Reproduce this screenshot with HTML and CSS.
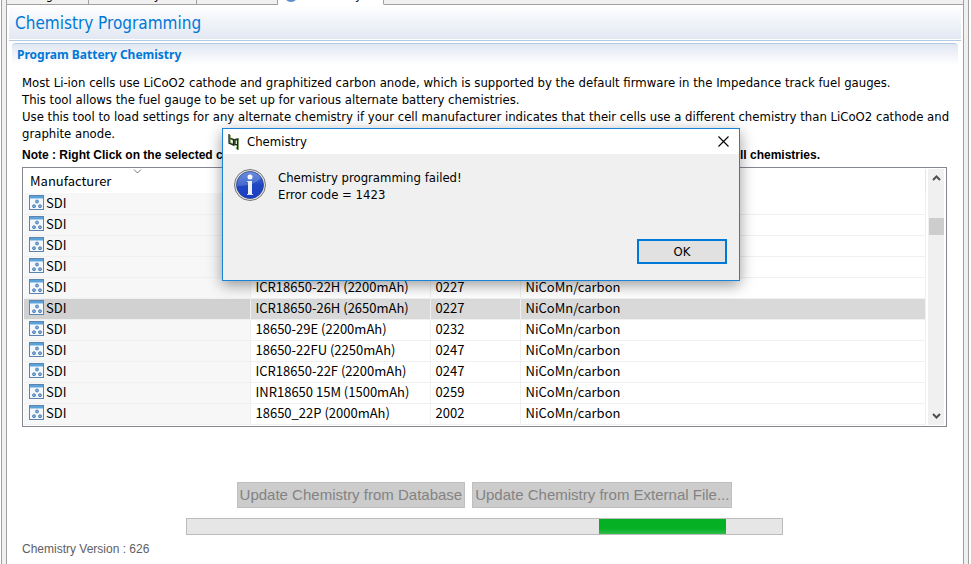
FILE: index.html
```html
<!DOCTYPE html>
<html lang="en">
<head>
    <meta charset="UTF-8">
    <meta name="viewport" content="width=device-width, initial-scale=1.0">
    <title>Chemistry Programming</title>
    <link rel="stylesheet" href="styles.css">
</head>
<body>
    <!-- shared icon for the manufacturer rows -->
    <svg class="defs" width="0" height="0" aria-hidden="true">
        <symbol id="cell" viewBox="0 0 15 16">
            <rect x="0.5" y="0.5" width="14" height="14" fill="#f2f8fd" stroke="#5c84ae"/>
            <rect x="1" y="1" width="13" height="2" fill="#5aa2d8"/>
            <rect x="1" y="3" width="13" height="1" fill="#a9d0ee"/>
            <g fill="#7fb0e0" stroke="#4471a6" stroke-width="0.8">
                <circle cx="8" cy="6.5" r="1.5"/>
                <circle cx="5" cy="11.2" r="1.5"/>
                <circle cx="11" cy="11.2" r="1.5"/>
            </g>
        </symbol>
    </svg>

    <div class="window">
        <div class="edge edge-left"></div>
        <div class="main">
            <div class="tabs">
                <div class="tab tab-registers">Registers</div>
                <div class="tab tab-memory">Data Memory</div>
                <div class="tab tab-commands"><span class="tab-dot gray"></span>Commands</div>
                <div class="tab tab-chem active"><span class="tab-dot"></span>Chemistry</div>
                <div class="tab-rest"></div>
            </div>

            <h1>Chemistry Programming</h1>
            <div class="section">
                <h2>Program Battery Chemistry</h2>
            </div>

            <div class="content">
                <p>Most Li-ion cells use LiCoO2 cathode and graphitized carbon anode, which is supported by the default firmware in the Impedance track fuel gauges.<br>
                This tool allows the fuel gauge to be set up for various alternate battery chemistries.<br>
                Use this tool to load settings for any alternate chemistry if your cell manufacturer indicates that their cells use a different chemistry than LiCoO2 cathode and graphite anode.</p>
                <div class="note">
                    <strong>Note : Right Click on the selected ch</strong>
                    <strong>ll chemistries.</strong>
                </div>

                <div class="list">
                    <table>
                        <colgroup><col class="c1"><col class="c2"><col class="c3"><col></colgroup>
                        <thead>
                            <tr>
                                <th>Manufacturer
                                    <svg class="sort" width="9" height="5" viewBox="0 0 9 5"><path d="M1 .5l3.500 3.500L8 .5" fill="none" stroke="#777"/></svg>
                                </th>
                                <th></th><th></th><th></th>
                            </tr>
                        </thead>
                        <tbody>
                            <tr><td><svg class="cell"><use href="#cell"/></svg>SDI</td><td></td><td></td><td></td></tr>
                            <tr><td><svg class="cell"><use href="#cell"/></svg>SDI</td><td></td><td></td><td></td></tr>
                            <tr><td><svg class="cell"><use href="#cell"/></svg>SDI</td><td></td><td></td><td></td></tr>
                            <tr><td><svg class="cell"><use href="#cell"/></svg>SDI</td><td></td><td></td><td></td></tr>
                            <tr><td><svg class="cell"><use href="#cell"/></svg>SDI</td><td>ICR18650-22H (2200mAh)</td><td>0227</td><td>NiCoMn/carbon</td></tr>
                            <tr class="selected"><td><svg class="cell"><use href="#cell"/></svg>SDI</td><td>ICR18650-26H (2650mAh)</td><td>0227</td><td>NiCoMn/carbon</td></tr>
                            <tr><td><svg class="cell"><use href="#cell"/></svg>SDI</td><td>18650-29E (2200mAh)</td><td>0232</td><td>NiCoMn/carbon</td></tr>
                            <tr><td><svg class="cell"><use href="#cell"/></svg>SDI</td><td>18650-22FU (2250mAh)</td><td>0247</td><td>NiCoMn/carbon</td></tr>
                            <tr><td><svg class="cell"><use href="#cell"/></svg>SDI</td><td>ICR18650-22F (2200mAh)</td><td>0247</td><td>NiCoMn/carbon</td></tr>
                            <tr><td><svg class="cell"><use href="#cell"/></svg>SDI</td><td>INR18650 15M (1500mAh)</td><td>0259</td><td>NiCoMn/carbon</td></tr>
                            <tr><td><svg class="cell"><use href="#cell"/></svg>SDI</td><td>18650_22P (2000mAh)</td><td>2002</td><td>NiCoMn/carbon</td></tr>
                        </tbody>
                    </table>
                    <div class="scrollbar">
                        <svg width="9" height="6" viewBox="0 0 9 6"><path d="M1 5l3.500-3.500L8 5" fill="none" stroke="#505050" stroke-width="2"/></svg>
                        <div class="track"><div class="thumb"></div></div>
                        <svg width="9" height="6" viewBox="0 0 9 6"><path d="M1 1l3.500 3.500L8 1" fill="none" stroke="#505050" stroke-width="2"/></svg>
                    </div>
                </div>

                <div class="actions">
                    <button class="btn" disabled>Update Chemistry from Database</button>
                    <button class="btn" disabled>Update Chemistry from External File...</button>
                </div>
                <div class="progress-bar" role="progressbar" aria-label="Programming"><div class="progress"></div></div>
                <div class="version">Chemistry Version : 626</div>
            </div>
        </div>
        <div class="edge edge-right"></div>
    </div>

    <div class="dialog" role="dialog" aria-labelledby="dialogTitle">
        <div class="titlebar">
            <svg width="12" height="16" viewBox="0 0 12 16" fill="none">
                <path d="M2 1v8l4 2V6L3 4.500M7 6l3-.5V15l-2-1.500" stroke="#8fb878" stroke-width="2"/>
                <path d="M1 0v9l4.500 2V5.500L2 4.500M10.500 5L7 5.500v5l3 .5M9.500 5.500V15.500" stroke="#1d2a1a" stroke-width="1.300"/>
            </svg>
            <span id="dialogTitle">Chemistry</span>
            <button class="close" aria-label="Close">
                <svg width="11" height="11" viewBox="0 0 11 11"><path d="M.5.5l10 10M10.500.5l-10 10" stroke="#000" stroke-width="1.100"/></svg>
            </button>
        </div>
        <div class="message">
            <svg width="32" height="32" viewBox="0 0 32 32">
                <defs>
                    <linearGradient id="blue" x1="0" y1="0" x2="0" y2="1">
                        <stop offset="0" stop-color="#4a78d8"/><stop offset="0.5" stop-color="#1f48c0"/><stop offset="1" stop-color="#1a3cc8"/>
                    </linearGradient>
                </defs>
                <circle cx="16" cy="16" r="15.500" fill="#e4e4e4" stroke="#777"/>
                <circle cx="16" cy="16" r="13.500" fill="url(#blue)" stroke="#2a3f8c" stroke-width="0.8"/>
                <path d="M3 17A13 13 0 0 1 27 9Q20 17 3 17z" fill="#fff" opacity="0.18"/>
                <circle cx="16" cy="8" r="2.500" fill="#fff"/>
                <path d="M14 12h4v14h-4z" fill="#f0f0f0"/>
                <path d="M13 12h1v1h-1zM13 25h6v1h-6z" fill="#d8dcea"/>
            </svg>
            <p>Chemistry programming failed!<br>Error code = 1423</p>
        </div>
        <div class="dialog-buttons"><button class="ok">OK</button></div>
    </div>
</body>
</html>
```
FILE: styles.css
```css
* { box-sizing: border-box; }
body { margin: 0; background: #fff; color: #000; font: 13px/17px "DejaVu Sans Condensed", "Noto Sans", sans-serif; overflow: hidden; }
h1, h2, p { margin: 0; }
.defs { position: absolute; }

.window { display: flex; min-height: 100vh; }
.edge { flex: none; background: #f0f0f0; border: solid #a0a0a0; border-width: 0 1px; }
.edge-left { width: 6px; margin-left: 1px; }
.edge-right { width: 6px; margin-right: 2px; }
.main { flex: 1; min-width: 0; }

/* tabs scrolled almost out of view */
.tabs { display: flex; align-items: flex-end; height: 5px; overflow: hidden; background: #f0f0f0; }
.tab { display: flex; flex: none; align-items: flex-end; gap: 4px; height: 24px; padding: 0 6px 2px 24px; border: solid #a0a0a0; border-width: 0 1px 1px 0; line-height: 15px; }
.tab-registers { width: 82px; }
.tab-memory { width: 108px; }
.tab-commands { width: 81px; padding-left: 8px; }
.tab-chem { width: 106px; padding-left: 6px; }
.tab.active { background: #fff; border-bottom-color: #fff; }
.tab-dot { width: 14px; height: 14px; border-radius: 7px; background: #5a8cc8; }
.tab-dot.gray { width: 10px; border-radius: 0; background: #aaa; }
.tab-rest { flex: 1; height: 24px; border-bottom: 1px solid #a0a0a0; }

h1 { margin: 0 2px; padding: 7px 6px 6px; border-bottom: 1px solid #b4cae2; background: linear-gradient(#fff, #e1e7f2); box-shadow: inset 0 -1px #fff; color: #0078d7; font-size: 17px; font-weight: 400; line-height: 22px; }
.section { margin: 2px 5px 0; padding-left: 5px; border-top: 1px solid #b4cae2; border-radius: 4px 4px 0 0; background: linear-gradient(#e1e7f2, #fff); }
h2 { color: #0078d7; font: bold 12px/21px "Noto Sans", sans-serif; }

.content { padding: 9px 13px 0 15px; }
.note { display: flex; justify-content: space-between; padding: 5px 130px 3px 0; font: bold 12px/17px "Liberation Sans", Arial, sans-serif; }

.list { display: flex; margin-right: 3px; padding: 1px; border: 1px solid #828790; }
table { flex: 1; border-collapse: collapse; table-layout: fixed; font-family: "Noto Sans CJK SC", "Noto Sans", sans-serif; }
.c1 { width: 226px; }
.c2 { width: 180px; }
.c3 { width: 90px; }
th { height: 24px; padding: 0 0 2px 6px; text-align: left; font-weight: 400; }
th:last-child { border-right: 1px solid #e5e5e5; }
.sort { float: right; margin: -3px 108px 0 0; }
td { height: 21px; padding: 0 0 2px 5px; border: solid #f0f0f0; border-width: 0 1px 1px 0; line-height: 17px; white-space: nowrap; }
td:first-child { background: #f7f7f7; }
.selected td { background: #d9d9d9; }
.selected td:first-child { background: #d1d1d1; }
.cell { width: 15px; height: 16px; margin-right: 2px; vertical-align: -3px; }
.scrollbar { display: flex; flex-direction: column; align-items: center; width: 16px; margin: 0 1px 0 2px; padding: 6px 0; background: #f0f0f0; }
.track { flex: 1; width: 15px; }
.thumb { height: 17px; margin-top: 37px; background: #cdcdcd; }

.actions { display: flex; justify-content: center; gap: 7px; margin-top: 55px; padding-right: 3px; }
.btn { height: 26px; padding: 0 2px; border: 1px solid #bfbfbf; background: #ccc; color: #838383; font: 15px "Liberation Sans", Arial, sans-serif; }
.progress-bar { height: 17px; margin: 10px 167px 0 164px; border: 1px solid #bcbcbc; background: #e6e6e6; }
.progress { width: 127px; height: 15px; margin-left: 412px; background: linear-gradient(#06b025 65%, #2fbd49); }
.version { margin-top: 6px; color: #606060; font: 12px/17px "Liberation Sans", Arial, sans-serif; }

.dialog { position: absolute; top: 128px; left: 222px; width: 518px; border: 1px solid #1883d7; background: #f0f0f0; box-shadow: 0 4px 14px rgba(0, 0, 0, 0.4); }
.titlebar { display: flex; align-items: center; gap: 7px; height: 25px; padding: 0 10px 0 5px; background: #fff; }
.close { display: flex; margin-left: auto; padding: 0; border: 0; background: none; }
.message { display: flex; gap: 12px; padding: 15px 11px 0; }
.dialog-buttons { display: flex; justify-content: flex-end; padding: 36px 12px 16px; }
.ok { width: 90px; height: 25px; padding: 0; border: 2px solid #0078d7; background: #e1e1e1; font: inherit; }
```
